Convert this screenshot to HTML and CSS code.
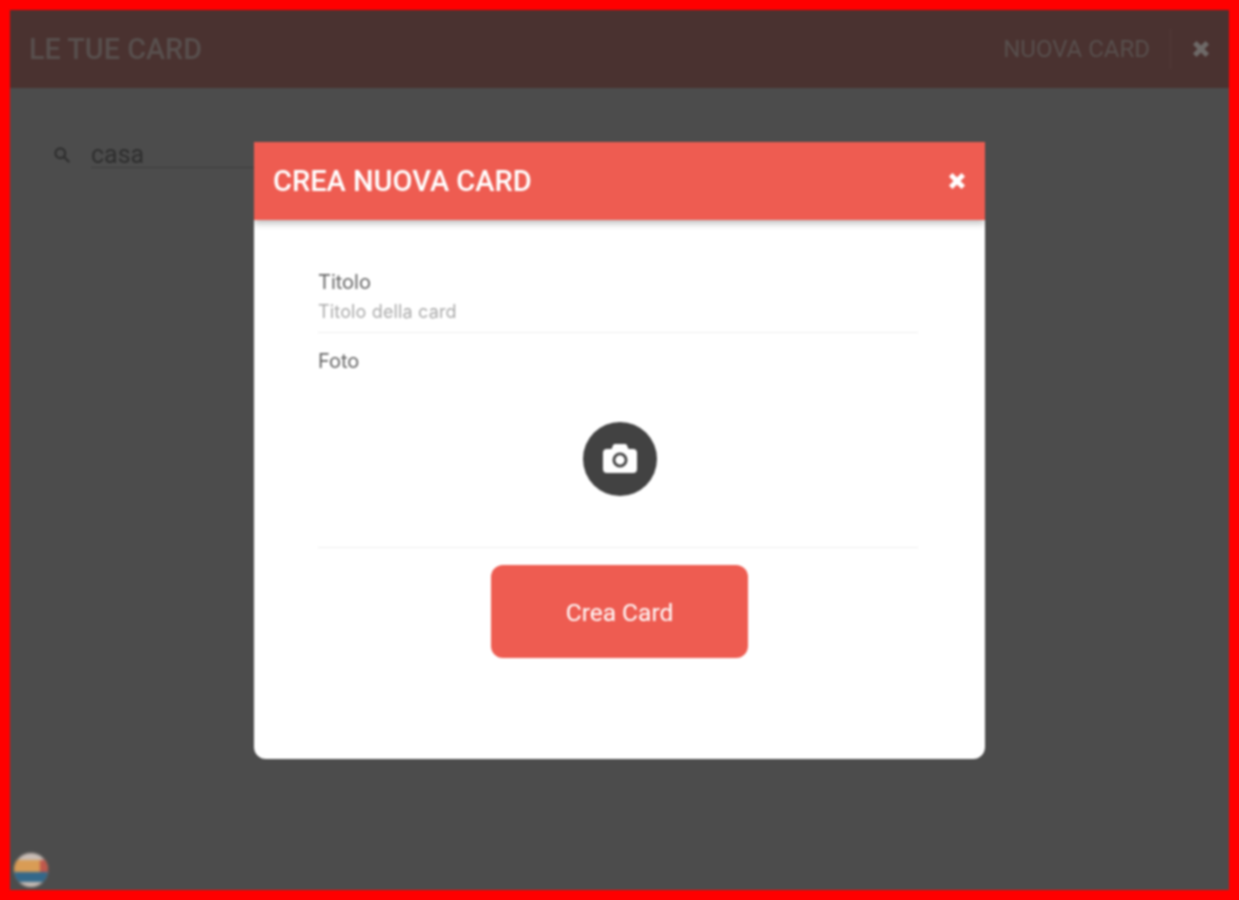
FILE: index.html
```html
<!DOCTYPE html>
<html lang="it">
<head>
<meta charset="utf-8">
<title>Le tue card</title>
<link rel="stylesheet" href="styles.css">
</head>
<body>
<div class="frame">
  <div class="app">
    <div class="search">
      <svg class="search-icon" viewBox="0 0 16 16"><circle cx="6.500" cy="6.500" r="4.300"/><path d="M10 10l4.500 4.500"/></svg>
      <div class="search-field">casa</div>
    </div>
    <div class="overlay">
      <section class="modal">
        <div class="modal-head">
          <h2 class="modal-title">CREA NUOVA CARD</h2>
          <svg class="x-icon x-modal" viewBox="0 0 16 16"><path d="M3 3l10 10M13 3L3 13"/></svg>
        </div>
        <div class="modal-body">
          <div class="field field-title">
            <label class="field-label">Titolo</label>
            <div class="field-hint">Titolo della card</div>
          </div>
          <div class="field field-photo">
            <label class="field-label">Foto</label>
            <div class="photo-area">
              <div class="photo-btn">
                <svg class="camera" viewBox="0 0 34 30"><path fill-rule="evenodd" d="M12 0h10a2 2 0 0 1 1.800 1.100L25.500 5H30a4 4 0 0 1 4 4v16a4 4 0 0 1-4 4H4a4 4 0 0 1-4-4V9a4 4 0 0 1 4-4h4.500l1.700-3.900A2 2 0 0 1 12 0zM17 8.500a7.500 7.500 0 1 0 0 15 7.500 7.500 0 0 0 0-15zm0 2.800a4.700 4.700 0 1 1 0 9.400 4.700 4.700 0 0 1 0-9.400z"/></svg>
              </div>
            </div>
          </div>
          <button class="submit" type="button">Crea Card</button>
        </div>
      </section>
    </div>
    <header class="topbar">
      <h1 class="topbar-title">LE TUE CARD</h1>
      <div class="topbar-actions">
        <span class="topbar-new">NUOVA CARD</span>
        <span class="topbar-divider"></span>
        <svg class="x-icon x-top" viewBox="0 0 16 16"><path d="M3 3l10 10M13 3L3 13"/></svg>
      </div>
    </header>
    <div class="bubble">
      <div class="bubble-top"><span class="bubble-spot"></span></div>
      <div class="bubble-bottom"></div>
    </div>
  </div>
</div>
</body>
</html>
```
FILE: styles.css
```css
* { box-sizing: border-box; }
html, body { margin: 0; height: 100%; }
body { font-family: "Inter", "Liberation Sans", sans-serif; overflow: hidden; background: #f00; }
.frame { width: 1239px; height: 900px; border: 10px solid #f00; }
.app { position: relative; width: 100%; height: 100%; background: #fff; overflow: hidden; filter: blur(0.8px); padding-top: 78px; }
.topbar { position: absolute; top: 0; left: 0; right: 0; height: 78px; background: #4a3230; display: flex; align-items: center; justify-content: space-between; padding: 0 19px 0 19px; }
.topbar-title { margin: 0; font: 500 28.800px "Roboto", sans-serif; color: #584f4d; }
.topbar-actions { display: flex; align-items: center; }
.topbar-new { font: 400 24px "Roboto", sans-serif; color: #584f4d; }
.topbar-divider { width: 1px; height: 40px; background: #523a38; margin: 0 20px; }
.x-icon { fill: none; stroke: #fff; stroke-width: 4; }
.x-top { width: 20px; height: 20px; margin-right: -1px; stroke: #6e6a68; }
.x-modal { width: 20px; height: 20px; }
.search { display: flex; align-items: flex-end; padding: 51px 0 0 43px; gap: 20px; }
.search-icon { width: 18px; height: 18px; fill: none; stroke: #999; stroke-width: 2; margin-bottom: 4px; }
.search-field { width: 300px; height: 29px; font: 400 25px/31px "Roboto", sans-serif; color: #999; border-bottom: 1px solid #ccc; }
.bubble { position: absolute; left: 4px; bottom: 3px; width: 34px; height: 34px; border-radius: 50%; overflow: hidden; background: #c9bdb6; padding-top: 7px; filter: blur(1px); }
.bubble-top { position: relative; height: 12px; background: #d99c55; }
.bubble-spot { position: absolute; right: 0; top: 0; width: 8px; height: 12px; background: #c0584c; }
.bubble-bottom { height: 10px; background: #33688a; }
.overlay { position: absolute; inset: 0; background: rgba(0,0,0,.7); display: flex; justify-content: center; padding-top: 132px; }
.modal { width: 731px; height: 617px; background: #fff; border-radius: 0 0 12px 12px; overflow: hidden; }
.modal-head { height: 78px; background: #ee5c51; display: flex; align-items: center; justify-content: space-between; padding: 0 18px 0 19px; box-shadow: 0 3px 7px rgba(0,0,0,.28); position: relative; }
.modal-title { margin: 0; font: 500 29px "Roboto", sans-serif; color: #fff; }
.modal-body { padding: 51px 64px 0; display: flex; flex-direction: column; }
.field { margin-right: 3px; }
.field-label { display: block; font: 400 20px/22px "Inter", sans-serif; color: #666; }
.field-title { height: 62px; border-bottom: 1px solid #eee; }
.field-hint { font: 400 18px/20px "Inter", sans-serif; color: #aaa; margin-top: 9px; letter-spacing: 0.15px; }
.field-photo { padding-top: 17px; height: 215px; border-bottom: 1px solid #eee; }
.photo-area { display: flex; justify-content: center; padding-top: 50px; margin-right: -3px; }
.photo-btn { width: 74px; height: 74px; border-radius: 50%; background: #424242; display: flex; align-items: center; justify-content: center; }
.camera { width: 34px; height: 30px; fill: #fff; }
.submit { align-self: center; margin-top: 17px; width: 257px; height: 93px; border: 0; border-radius: 12px; background: #ee5c51; color: #fff; font: 400 24.500px "Roboto", sans-serif; padding-top: 2px; }
```
